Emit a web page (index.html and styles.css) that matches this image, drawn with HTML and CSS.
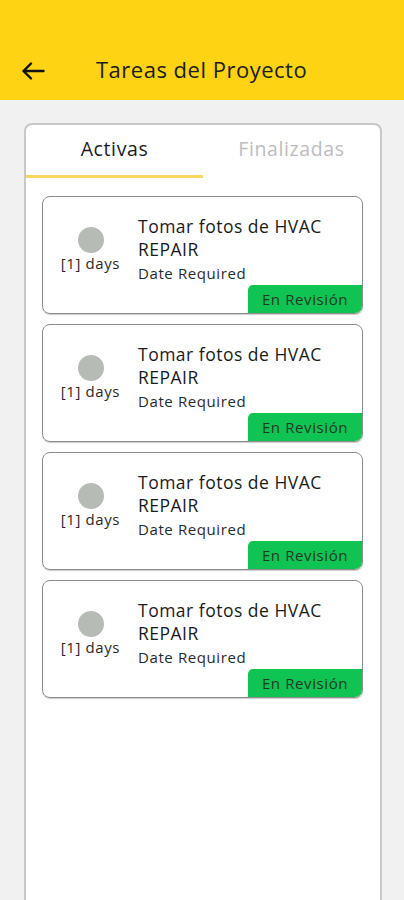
FILE: index.html
```html
<!DOCTYPE html>
<html lang="es">
<head>
  <meta charset="UTF-8" />
  <meta name="viewport" content="width=device-width, initial-scale=1.0" />
  <title>Tareas del Proyecto</title>
  <link rel="stylesheet" href="styles.css">
</head>
<body>
  <header class="barra">
    <span class="volver">
      <svg width="24" height="24" viewBox="0 0 24 24"><path d="M22.5 12H2.5M10 4.5L2.5 12l7.5 7.5" fill="none" stroke="#111" stroke-width="2.4" stroke-linecap="round" stroke-linejoin="round"/></svg>
    </span>
    <h1>Tareas del Proyecto</h1>
  </header>

  <div class="panel">
    <div class="tabs">
      <div class="tab activa">Activas</div>
      <div class="tab">Finalizadas</div>
    </div>

    <div class="lista">
      <div class="tarea">
        <div class="estado">
          <span class="punto"></span>
          <span class="dias">[1] days</span>
        </div>
        <div class="info">
          <div class="titulo">Tomar fotos de HVAC REPAIR</div>
          <div class="fecha">Date Required</div>
          <div class="badge">En Revisión</div>
        </div>
      </div>
      <div class="tarea">
        <div class="estado">
          <span class="punto"></span>
          <span class="dias">[1] days</span>
        </div>
        <div class="info">
          <div class="titulo">Tomar fotos de HVAC REPAIR</div>
          <div class="fecha">Date Required</div>
          <div class="badge">En Revisión</div>
        </div>
      </div>
      <div class="tarea">
        <div class="estado">
          <span class="punto"></span>
          <span class="dias">[1] days</span>
        </div>
        <div class="info">
          <div class="titulo">Tomar fotos de HVAC REPAIR</div>
          <div class="fecha">Date Required</div>
          <div class="badge">En Revisión</div>
        </div>
      </div>
      <div class="tarea">
        <div class="estado">
          <span class="punto"></span>
          <span class="dias">[1] days</span>
        </div>
        <div class="info">
          <div class="titulo">Tomar fotos de HVAC REPAIR</div>
          <div class="fecha">Date Required</div>
          <div class="badge">En Revisión</div>
        </div>
      </div>
    </div>
  </div>
</body>
</html>
```

FILE: styles.css
```css
body {
  margin: 0;
  background: #f1f1f1;
  color: #1a1a1a;
  font-family: 'Open Sans', 'Noto Sans', sans-serif;
  height: 900px;
  overflow: hidden;
}
.barra {
  background: #fdd314;
  height: 100px;
  box-sizing: border-box;
  padding: 38px 0 0 21px;
  display: flex;
  align-items: center;
}
.barra .volver {
  width: 24px;
  height: 48px;
  display: flex;
  align-items: center;
  padding-top: 3px;
}
.barra h1 {
  margin: 0 0 0 51px;
  font-size: 22px;
  font-weight: 500;
  letter-spacing: 0.5px;
  color: #1c1c1c;
}
.panel {
  margin: 23px 22px 0 24px;
  height: 800px;
  background: #fff;
  border: 2px solid #c8c8c8;
  border-radius: 8px;
}
.tabs {
  display: flex;
}
.tab {
  flex: 1;
  text-align: center;
  font-size: 19.5px;
  letter-spacing: 0.6px;
  padding: 10px 0 13px;
  color: #bdbdbd;
  border-bottom: 3px solid transparent;
}
.tab.activa {
  color: #1c1c1c;
  border-bottom-color: #fbd55c;
}
.lista {
  padding: 18px 17px 0 16px;
  display: flex;
  flex-direction: column;
  gap: 10px;
}
.tarea {
  display: flex;
  height: 118px;
  box-sizing: border-box;
  border: 1px solid #8c8c8c;
  border-radius: 8px;
  box-shadow: 0 1px 1px rgba(0, 0, 0, 0.2);
  overflow: hidden;
}
.estado {
  width: 95px;
  display: flex;
  flex-direction: column;
  align-items: center;
  padding-top: 30px;
}
.punto {
  width: 26px;
  height: 26px;
  border-radius: 50%;
  background: #b6bbb6;
}
.dias {
  font-size: 15px;
  letter-spacing: 0.6px;
  color: #2a2a2a;
}
.info {
  flex: 1;
  display: flex;
  flex-direction: column;
  padding-top: 18px;
}
.titulo {
  font-size: 17.5px;
  letter-spacing: 0.5px;
  line-height: 23px;
  padding-right: 30px;
}
.fecha {
  font-size: 15px;
  letter-spacing: 0.6px;
  margin-top: 2px;
  color: #2a2a2a;
}
.badge {
  margin-top: auto;
  align-self: flex-end;
  width: 114px;
  height: 28px;
  line-height: 28px;
  text-align: center;
  background: #10c453;
  color: #1e3a25;
  font-size: 15px;
  letter-spacing: 0.6px;
  border-top-left-radius: 5px;
}
```
